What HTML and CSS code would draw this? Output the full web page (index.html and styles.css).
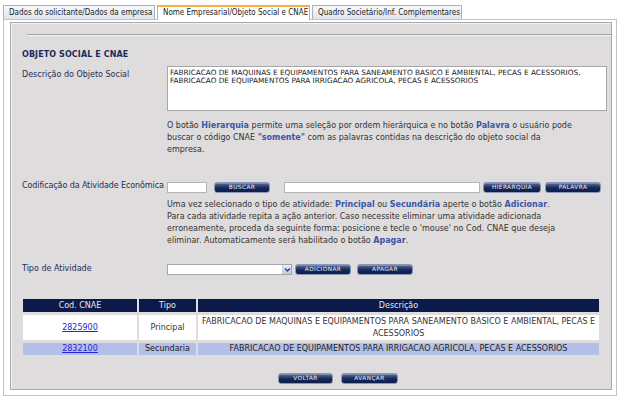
FILE: index.html
```html
<!DOCTYPE html>
<html lang="pt">
<head>
<meta charset="utf-8">
<link rel="stylesheet" href="styles.css">
</head>
<body>
<div class="tabs">
  <div class="tab">Dados do solicitante/Dados da empresa</div>
  <div class="tab active">Nome Empresarial/Objeto Social e CNAE</div>
  <div class="tab">Quadro Societário/Inf. Complementares</div>
</div>
<div class="frame">
  <div class="panel">
    <div class="rule"></div>
    <h1 class="title">OBJETO SOCIAL E CNAE</h1>
    <div class="form">
      <div class="label label-desc">Descrição do Objeto Social</div>
      <div class="field">
        <div class="textarea">FABRICACAO DE MAQUINAS E EQUIPAMENTOS PARA SANEAMENTO BASICO E AMBIENTAL, PECAS E ACESSORIOS,<br>FABRICACAO DE EQUIPAMENTOS PARA IRRIGACAO AGRICOLA, PECAS E ACESSORIOS</div>
        <p class="help help-1">O botão <b class="hl">Hierarquia</b> permite uma seleção por ordem hierárquica e no botão <b class="hl">Palavra</b> o usuário pode buscar o código CNAE <b class="hl">"somente"</b> com as palavras contidas na descrição do objeto social da empresa.</p>
      </div>

      <div class="label label-cod">Codificação da Atividade Econômica</div>
      <div class="field">
        <div class="row row-cod">
          <div class="input input-code"></div>
          <button class="btn btn-buscar">BUSCAR</button>
          <div class="input input-word"></div>
          <button class="btn btn-hier">HIERARQUIA</button>
          <button class="btn btn-pal">PALAVRA</button>
        </div>
        <p class="help help-2">Uma vez selecionado o tipo de atividade: <b class="hl">Principal</b> ou <b class="hl">Secundária</b> aperte o botão <b class="hl">Adicionar</b>.<br>Para cada atividade repita a ação anterior. Caso necessite eliminar uma atividade adicionada erroneamente, proceda da seguinte forma: posicione e tecle o 'mouse' no Cod. CNAE que deseja eliminar. Automaticamente será habilitado o botão <b class="hl">Apagar</b>.</p>
      </div>

      <div class="label label-tipo">Tipo de Atividade</div>
      <div class="field">
        <div class="row row-tipo">
          <div class="select"><span class="arrow"><svg width="7" height="6" viewBox="0 0 7 6"><path d="M1 1.5 L3.5 4 L6 1.5" fill="none" stroke="#2a3f8a" stroke-width="1.4"/></svg></span></div>
          <button class="btn btn-add">ADICIONAR</button>
          <button class="btn btn-del">APAGAR</button>
        </div>
      </div>
    </div>

    <table class="grid">
      <thead>
        <tr><th class="c-cod">Cod. CNAE</th><th class="c-tipo">Tipo</th><th>Descrição</th></tr>
      </thead>
      <tbody>
        <tr class="r-white"><td><a href="#">2825900</a></td><td>Principal</td><td>FABRICACAO DE MAQUINAS E EQUIPAMENTOS PARA SANEAMENTO BASICO E AMBIENTAL, PECAS E ACESSORIOS</td></tr>
        <tr class="r-blue"><td><a href="#">2832100</a></td><td>Secundaria</td><td>FABRICACAO DE EQUIPAMENTOS PARA IRRIGACAO AGRICOLA, PECAS E ACESSORIOS</td></tr>
      </tbody>
    </table>

    <div class="nav">
      <button class="btn btn-nav">VOLTAR</button>
      <button class="btn btn-nav">AVANÇAR</button>
    </div>
  </div>
</div>
</body>
</html>
```

FILE: styles.css
```css
* { box-sizing: border-box; }
html, body { margin: 0; padding: 0; background: #fff; }
body {
  font-family: "DejaVu Sans", Verdana, sans-serif;
  font-size: 8px;
  color: #333;
  width: 622px;
  height: 398px;
  overflow: hidden;
}
.tabs {
  display: flex;
  gap: 2px;
  padding: 5px 0 0 3px;
  height: 19px;
  align-items: flex-end;
}
.tab {
  height: 14px;
  padding: 0 5px;
  border: 1px solid #a9b2bf;
  border-bottom: none;
  background: linear-gradient(#f7f8fa, #dfe5ec);
  font-family: "DejaVu Sans Condensed", "DejaVu Sans", sans-serif;
  font-size: 8px;
  line-height: 13px;
  color: #222;
  white-space: nowrap;
  width: 152px;
}
.tab.active {
  background: #fff;
  border-top: 2px solid #f2b047;
  line-height: 12px;
  width: 153px;
  height: 15px;
  margin-bottom: -1px;
}
.tab:last-child { width: 150px; }
.frame {
  margin: 0 5px 0 3px;
  height: 377px;
  border: 1px solid #c4c4c4;
  background: #fff;
  padding: 2px 4px 6px 6px;
}
.panel {
  height: 368px;
  background: #dedcdc;
  border: 1px solid #a9a9a9;
  box-shadow: inset 1px 1px 0 #f2f2f2;
  padding: 11px 0 0 11px;
}
.rule {
  height: 2px;
  margin-left: 5px;
  border-top: 1px solid #a3a3a3;
  border-bottom: 1px solid #f4f4f4;
}
.title {
  margin: 14px 0 0 0;
  font-size: 8px;
  font-weight: bold;
  color: #1d2b59;
  line-height: 10px;
  letter-spacing: 0.1px;
}
.form {
  display: grid;
  grid-template-columns: 145px 440px;
  margin-top: 6px;
}
.label {
  color: #1f2d55;
  line-height: 10px;
  white-space: nowrap;
}
.label-desc { padding-top: 4px; }
.textarea {
  width: 440px;
  height: 45px;
  background: #fff;
  border: 1px solid #a7a7a7;
  font-size: 7.3px;
  line-height: 8px;
  padding: 2px 2px;
  color: #1a1a1a;
  white-space: nowrap;
  overflow: hidden;
}
.help {
  margin: 0;
  line-height: 12px;
  color: #333;
}
.help-1 { margin-top: 9px; width: 408px; }
.hl { color: #3b56a6; font-weight: bold; }
.label-cod { margin-top: 24px; padding-top: 1px; letter-spacing: -0.1px; }
.row { display: flex; align-items: center; }
.row-cod { margin-top: 25px; height: 12px; }
.input {
  height: 11px;
  background: #fff;
  border: 1px solid #b4b4b4;
}
.input-code { width: 40px; }
.input-word { width: 196px; margin-left: 14px; }
.btn {
  font-family: "DejaVu Sans", sans-serif;
  height: 11px;
  width: 56px;
  padding: 0;
  border: 1px solid #8b96b4;
  border-radius: 3px;
  background: linear-gradient(#5d6d98, #15285a 55%, #0d1e4c);
  color: #e6ebf7;
  font-size: 5.8px;
  letter-spacing: 0.4px;
  line-height: 9px;
  text-align: center;
  box-shadow: inset 0 1px 0 rgba(255,255,255,0.25);
}
.btn-buscar { margin-left: 7px; }
.btn-hier { margin-left: 3px; width: 58px; }
.btn-pal { margin-left: 4px; }
.help-2 { margin-top: 6px; width: 406px; }
.label-tipo { margin-top: 17px; }
.row-tipo { margin-top: 17px; }
.select {
  width: 125px;
  height: 11px;
  background: #fff;
  border: 1px solid #a5a5a5;
  display: flex;
  justify-content: flex-end;
}
.arrow {
  width: 9px;
  height: 9px;
  background: linear-gradient(#e6ecf8, #bccbea);
  display: flex;
  align-items: center;
  justify-content: center;
  border-left: 1px solid #c3cde2;
}
.btn-add { margin-left: 3px; }
.btn-del { margin-left: 6px; }
.grid {
  margin-top: 21px;
  margin-left: -1px;
  width: 580px;
  border-spacing: 2px 3px;
  table-layout: fixed;
}
.grid th {
  background: #0c1a4a;
  color: #e6e9f2;
  font-weight: normal;
  height: 13px;
  padding: 0;
  line-height: 12px;
  text-align: center;
}
.c-cod { width: 114px; }
.c-tipo { width: 57px; }
.grid td {
  text-align: center;
  padding: 0 3px;
  line-height: 12px;
  color: #333;
}
.r-white td { background: #fff; height: 25px; }
.r-blue td { background: #b3bfe9; height: 12px; color: #222; }
.grid a { color: #2323d8; text-decoration: underline; }
.nav {
  display: flex;
  gap: 8px;
  padding-left: 256px;
  margin-top: 15px;
}
.btn-nav { width: 55px; }
.btn-nav + .btn-nav { width: 57px; }
```
